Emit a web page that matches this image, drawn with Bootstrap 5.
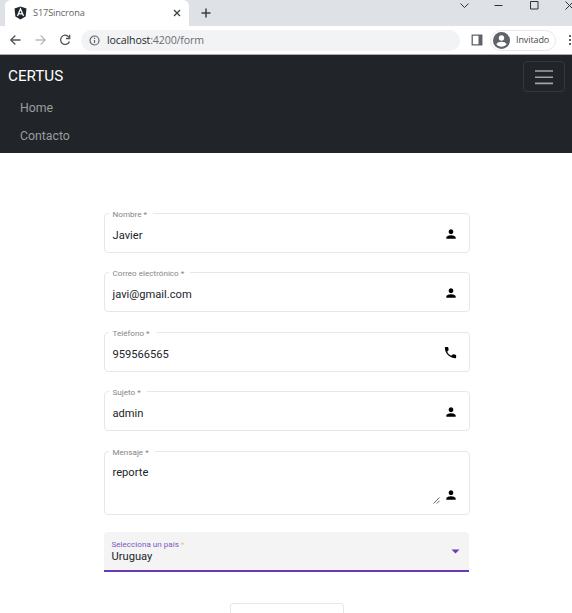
<!DOCTYPE html>
<html lang="es">
<head>
<meta charset="utf-8">
<title>S17Sincrona</title>
<link href="https://cdn.jsdelivr.net/npm/bootstrap@5.3.0/dist/css/bootstrap.min.css" rel="stylesheet">
<style>
body{font-family:Roboto,sans-serif;font-size:11px;line-height:14px;color:#212529;width:572px;height:613px;overflow:hidden;background:#fff}
svg{display:block;flex:none}
.chrome{font-family:"Open Sans","Noto Sans",sans-serif;color:#5f6368}
.tabstrip{height:26px;background:#dee1e6;padding-left:5px}
.tab{width:184px;height:26px;background:#fff;border-radius:6px 6px 0 0;padding:0 8px 0 9px}
.tab-title{font-size:9.2px;letter-spacing:-.12px;margin-left:6px}
.toolbar{height:29px;border-bottom:1px solid #a9abad;padding-left:9px}
.omnibox{width:379px;height:21px;background:#f1f3f4;border-radius:11px;margin-left:10px;padding-left:8px}
.url{font-size:10.6px;letter-spacing:-.13px;margin-left:7px;color:#6b6f74}
.url b{font-weight:400;color:#27292d}
.profile{width:66px;height:21px;border:1px solid #e6e8ea;border-radius:11px;padding-left:2px;margin-left:7px;font-size:9px;letter-spacing:-.1px;color:#45484c}
.appbar{height:98px;background:#212529;padding:6px 7px 0 8px}
.appbar .navbar-brand{font-size:15.2px;line-height:20px;color:#fff;margin-top:5px}
.appbar .navbar-toggler{width:42px;height:31px;border:1px solid #34383c;border-radius:4px}
.appbar .nav-link{font-size:12.3px;line-height:16px;color:#9b9d9f;padding:0 0 0 12px;margin-bottom:12px}
.contact{width:366px;margin:60px 0 0 103.5px}
.field{height:40px;border:1px solid #e7e7e7;border-radius:4px;margin-bottom:19.4px;padding:2px 11px 0 8px}
.field label{position:absolute;top:-6px;left:4px;padding:0 6px 0 4px;background:#fff;font-size:8.1px;line-height:12px;color:#858585;white-space:nowrap}
.field.tall{height:64px;margin-bottom:17.5px;padding-top:14px}
.picker{width:365px;height:40px;background:#f4f4f4;border-radius:4px 4px 0 0;border-bottom:2px solid #673ab7;padding:6px 9px 0 8px}
.picker label{font-size:8.1px;line-height:12px;color:#7e57c2}
.picker label span{color:#ffc36b}
.send{width:114px;height:30px;border:1px solid #e7e7e7;border-radius:3px;background:#fff;margin:31px 0 0 126px}
.val{font-size:11.15px;line-height:14px}
</style>
<script src="https://cdn.jsdelivr.net/npm/bootstrap@5.3.0/dist/js/bootstrap.bundle.min.js"></script>
</head>
<body>
<svg width="0" height="0" class="position-absolute"><defs>
<symbol id="person" viewBox="0 0 24 24"><path d="M12 12c2.21 0 4-1.79 4-4s-1.790-4-4-4-4 1.790-4 4 1.790 4 4 4zm0 2c-2.670 0-8 1.340-8 4v2h16v-2c0-2.660-5.330-4-8-4z"/></symbol>
</defs></svg>
<div class="chrome">
  <div class="tabstrip d-flex">
    <div class="tab d-flex align-items-center">
      <svg width="13" height="14" viewBox="0 0 13 14"><path fill="#20262e" d="M6.500.5 12.500 2.600 11.600 10.600 6.500 13.500 1.400 10.600.5 2.600z"/><path d="M3.500 10 6.500 3 9.500 10M4.700 7.800h3.600" fill="none" stroke="#fff" stroke-width="1.300"/></svg>
      <span class="tab-title">S17Sincrona</span>
      <svg class="ms-auto" width="8" height="8" viewBox="0 0 8 8" stroke="#3c4043" stroke-width="1.300"><path d="m1 1 6 6M7 1 1 7"/></svg>
    </div>
    <svg width="10" height="10" viewBox="0 0 10 10" stroke="#3c4043" stroke-width="1.500" style="margin:8px 0 0 12px"><path d="M5 .5v9M.5 5h9"/></svg>
    <svg class="ms-auto" width="114" height="14" viewBox="0 0 114 14" fill="none" stroke="#303236"><path d="m2.500 3.500 4 4 4-4M36.500 5.500h8M72.500 1.500h7.500v7.500h-7.500zM107.500 1.500l8 8M115.500 1.500l-8 8"/></svg>
  </div>
  <div class="toolbar d-flex align-items-center">
    <svg width="62" height="14" viewBox="0 0 62 14" fill="none" stroke-width="1.300"><path stroke="#505357" d="M11.500 7H2M6.300 2.500 1.800 7l4.500 4.500"/><path stroke="#b8babd" d="M26.500 7H36M31.700 2.500 36.200 7l-4.500 4.500"/><path stroke="#505357" d="M60 4.200A4.600 4.600 0 1 0 60.500 8.500M60.700 1.800v3.700H57"/></svg>
    <div class="omnibox d-flex align-items-center">
      <svg width="11" height="11" viewBox="0 0 11 11" fill="none" stroke="#5f6368" stroke-width="1.200"><circle cx="5.500" cy="5.500" r="4.500"/><path d="M5.500 5v3M5.500 2.800v1.200"/></svg>
      <span class="url"><b>localhost</b>:4200/form</span>
    </div>
    <svg width="12" height="12" viewBox="0 0 12 12" style="margin-left:11px"><path fill="none" stroke="#5f6368" stroke-width="1.300" d="M1.200 1.200h9.600v9.600H1.200z"/><path fill="#5f6368" d="M7.500 1H11v10H7.500z"/></svg>
    <div class="profile d-flex align-items-center">
      <svg width="17" height="17" viewBox="0 0 17 17"><circle cx="8.500" cy="8.500" r="8.500" fill="#5f6368"/><circle cx="8.500" cy="6" r="2.700" fill="#fff"/><path fill="#fff" d="M3.300 12.300c1.600-3.300 8.800-3.300 10.400 0-2.300 3.100-8.100 3.100-10.400 0z"/></svg>
      <span style="margin-left:6px">Invitado</span>
    </div>
    <svg width="4" height="12" viewBox="0 0 4 12" fill="#5f6368" style="margin-left:12px"><path d="M1 1h2v2H1zM1 5h2v2H1zM1 9h2v2H1z"/></svg>
  </div>
</div>
<nav class="appbar">
  <div class="d-flex justify-content-between align-items-start">
    <a class="navbar-brand" href="#">CERTUS</a>
    <button class="navbar-toggler d-flex align-items-center justify-content-center p-0" aria-label="Menu">
      <svg width="18" height="16" viewBox="0 0 18 16" stroke="#a2a4a6" stroke-width="1.600"><path d="M0 2h18M0 8.200h18M0 14.400h18"/></svg>
    </button>
  </div>
  <div class="nav flex-column pt-1">
    <a class="nav-link mt-1" href="#" style="margin-top:1px">Home</a>
    <a class="nav-link" href="#">Contacto</a>
  </div>
</nav>
<form class="contact">
  <div class="field position-relative d-flex align-items-center justify-content-between"><label>Nombre *</label><span class="val pt-1">Javier</span><svg width="14" height="14"><use href="#person"/></svg></div>
  <div class="field position-relative d-flex align-items-center justify-content-between"><label>Correo electrónico *</label><span class="val pt-1">javi@gmail.com</span><svg width="14" height="14"><use href="#person"/></svg></div>
  <div class="field position-relative d-flex align-items-center justify-content-between"><label>Teléfono *</label><span class="val pt-1">959566565</span><svg width="15" height="15" viewBox="0 0 24 24"><path d="M6.620 10.790c1.440 2.830 3.760 5.140 6.590 6.590l2.200-2.200c.27-.27.67-.36 1.020-.24 1.120.37 2.330.57 3.570.57.550 0 1 .45 1 1V20c0 .55-.45 1-1 1-9.390 0-17-7.610-17-17 0-.55.45-1 1-1h3.500c.55 0 1 .45 1 1 0 1.250.2 2.450.57 3.570.11.350.03.740-.25 1.020z"/></svg></div>
  <div class="field position-relative d-flex align-items-center justify-content-between"><label>Sujeto *</label><span class="val pt-1">admin</span><svg width="14" height="14"><use href="#person"/></svg></div>
  <div class="field tall position-relative d-flex justify-content-between"><label>Mensaje *</label><span class="val">reporte</span>
    <span class="d-flex align-items-end pb-2 mb-1"><svg width="7" height="7" viewBox="0 0 7 7" stroke="#555" stroke-width=".9" class="me-1" style="margin-bottom:-2px"><path d="M.5 6.500l6-6M3.800 6.500l2.700-2.700"/></svg><svg width="14" height="14"><use href="#person"/></svg></span></div>
  <div class="picker d-flex justify-content-between">
    <div class="d-flex flex-column"><label>Selecciona un país <span>*</span></label><span class="val">Uruguay</span></div>
    <svg width="9" height="5" viewBox="0 0 9 5" fill="#673ab7" style="margin-top:11px"><path d="M.5.500h8l-4 4z"/></svg>
  </div>
  <button type="button" class="send d-block" aria-label="Enviar"></button>
</form>
</body>
</html>
